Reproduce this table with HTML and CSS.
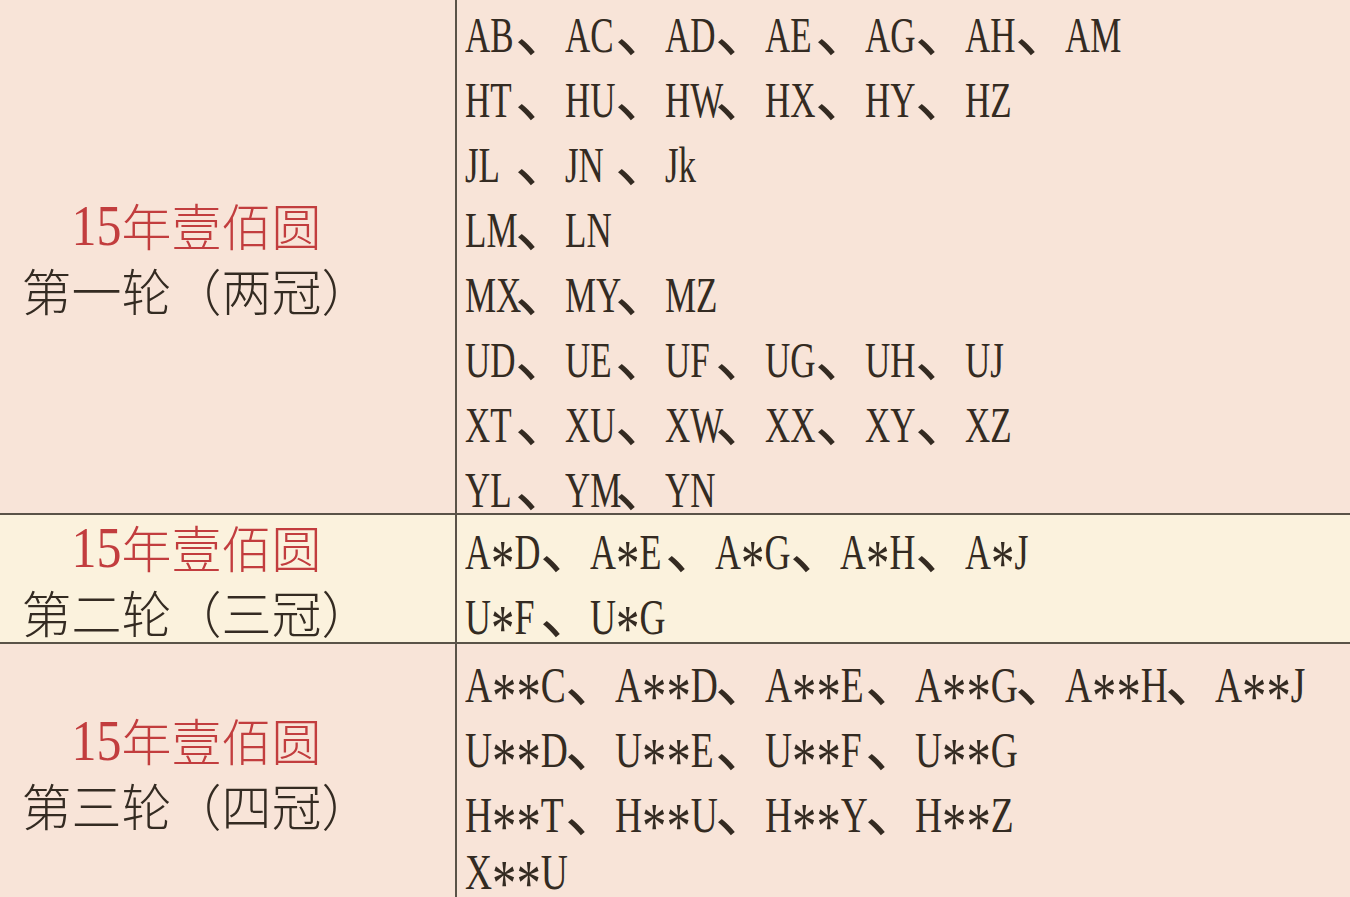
FILE: index.html
```html
<!DOCTYPE html>
<html lang="zh">
<head>
<meta charset="utf-8">
<title>15年壹佰圆 冠号</title>
<link rel="stylesheet" href="styles.css">
</head>
<body>
<div class="table">
  <div class="row r1">
    <div class="label"><div class="ln red"><span class="num">15</span><span>年壹佰圆</span></div><div class="ln"><span>第一轮（两冠）</span></div></div>
    <div class="codes n2">
      <div class="line"><span class="cd"><i>AB</i></span>、<span class="cd"><i>AC</i></span>、<span class="cd"><i>AD</i></span>、<span class="cd"><i>AE</i></span>、<span class="cd"><i>AG</i></span>、<span class="cd"><i>AH</i></span>、<span class="cd"><i>AM</i></span></div>
      <div class="line"><span class="cd"><i>HT</i></span>、<span class="cd"><i>HU</i></span>、<span class="cd"><i>HW</i></span>、<span class="cd"><i>HX</i></span>、<span class="cd"><i>HY</i></span>、<span class="cd"><i>HZ</i></span></div>
      <div class="line"><span class="cd"><i>JL</i></span>、<span class="cd"><i>JN</i></span>、<span class="cd"><i>Jk</i></span></div>
      <div class="line"><span class="cd"><i>LM</i></span>、<span class="cd"><i>LN</i></span></div>
      <div class="line"><span class="cd"><i>MX</i></span>、<span class="cd"><i>MY</i></span>、<span class="cd"><i>MZ</i></span></div>
      <div class="line"><span class="cd"><i>UD</i></span>、<span class="cd"><i>UE</i></span>、<span class="cd"><i>UF</i></span>、<span class="cd"><i>UG</i></span>、<span class="cd"><i>UH</i></span>、<span class="cd"><i>UJ</i></span></div>
      <div class="line"><span class="cd"><i>XT</i></span>、<span class="cd"><i>XU</i></span>、<span class="cd"><i>XW</i></span>、<span class="cd"><i>XX</i></span>、<span class="cd"><i>XY</i></span>、<span class="cd"><i>XZ</i></span></div>
      <div class="line"><span class="cd"><i>YL</i></span>、<span class="cd"><i>YM</i></span>、<span class="cd"><i>YN</i></span></div>
    </div>
  </div>
  <div class="row r2">
    <div class="label"><div class="ln red"><span class="num">15</span><span>年壹佰圆</span></div><div class="ln"><span>第二轮（三冠）</span></div></div>
    <div class="codes n3">
      <div class="line"><span class="cd"><i>A<b>*</b>D</i></span>、<span class="cd"><i>A<b>*</b>E</i></span>、<span class="cd"><i>A<b>*</b>G</i></span>、<span class="cd"><i>A<b>*</b>H</i></span>、<span class="cd"><i>A<b>*</b>J</i></span></div>
      <div class="line"><span class="cd"><i>U<b>*</b>F</i></span>、<span class="cd"><i>U<b>*</b>G</i></span></div>
    </div>
  </div>
  <div class="row r3">
    <div class="label"><div class="ln red"><span class="num">15</span><span>年壹佰圆</span></div><div class="ln"><span>第三轮（四冠）</span></div></div>
    <div class="codes n4">
      <div class="line"><span class="cd"><i>A<b>**</b>C</i></span>、<span class="cd"><i>A<b>**</b>D</i></span>、<span class="cd"><i>A<b>**</b>E</i></span>、<span class="cd"><i>A<b>**</b>G</i></span>、<span class="cd"><i>A<b>**</b>H</i></span>、<span class="cd"><i>A<b>**</b>J</i></span></div>
      <div class="line"><span class="cd"><i>U<b>**</b>D</i></span>、<span class="cd"><i>U<b>**</b>E</i></span>、<span class="cd"><i>U<b>**</b>F</i></span>、<span class="cd"><i>U<b>**</b>G</i></span></div>
      <div class="line"><span class="cd"><i>H<b>**</b>T</i></span>、<span class="cd"><i>H<b>**</b>U</i></span>、<span class="cd"><i>H<b>**</b>Y</i></span>、<span class="cd"><i>H<b>**</b>Z</i></span></div>
      <div class="line"><span class="cd"><i>X<b>**</b>U</i></span></div>
    </div>
  </div>
</div>
</body>
</html>
```
FILE: styles.css
```css
html, body {
  margin: 0;
  padding: 0;
}
body {
  width: 1350px;
  height: 897px;
  overflow: hidden;
  background: #f8e4d8;
  color: #342b22;
  font-family: "Liberation Serif", "Noto Sans CJK SC", serif;
  font-size: 50px;
}
.table {
  display: flex;
  flex-direction: column;
}
.row {
  display: grid;
  grid-template-columns: 455px minmax(0, 1fr);
  grid-template-rows: minmax(0, 1fr);
  border-bottom: 2px solid #5a5348;
  flex: none;
}
.r1 { height: 513px; background: #f8e4d8; }
.r2 { height: 127px; background: #fbf2dd; }
.r3 { height: 255px; background: #f8e4d8; border-bottom: none; }

.label {
  display: flex;
  flex-direction: column;
  align-items: center;
  justify-content: center;
  padding: 0 62px 0 0;
  font-family: "Noto Sans CJK SC", sans-serif;
  font-weight: 300;
  white-space: nowrap;
}
.ln {
  display: flex;
  align-items: baseline;
  height: 65px;
  line-height: 65px;
}
.label .red {
  color: #c23d3e;
}
.label .num {
  font-family: "Liberation Serif", serif;
  font-weight: 400;
  display: inline-block;
  transform: scaleY(1.15);
  transform-origin: 50% 85%;
}
.codes {
  border-left: 2px solid #5a5348;
  padding-left: 8px;
  white-space: nowrap;
  font-family: "Noto Sans CJK SC", sans-serif;
  font-weight: 400;
  font-size: 58px;
  letter-spacing: -8px;
}
.line {
  display: flex;
  align-items: baseline;
  height: 65px;
  line-height: 65px;
}
.r1 .line:first-child { margin-top: -5px; }
.r2 .line:first-child { margin-top: -3px; }
.r3 .codes { padding-top: 1px; }

.cd {
  display: inline-block;
  font-family: "Liberation Serif", serif;
  font-weight: 400;
  font-size: 50px;
  letter-spacing: 0;
}
.n2 .cd { width: 50px; }
.n3 .cd { width: 75px; }
.n4 .cd { width: 100px; }
.cd i {
  display: inline-block;
  font-style: normal;
  transform: scaleX(0.7);
  transform-origin: 0 50%;
}
.n3 .cd i { transform: scaleX(0.72); }
.n4 .cd i { transform: scaleX(0.75); }
.cd b {
  font-weight: 400;
  font-size: 1.3em;
  line-height: 0;
  vertical-align: -16px;
}
```
